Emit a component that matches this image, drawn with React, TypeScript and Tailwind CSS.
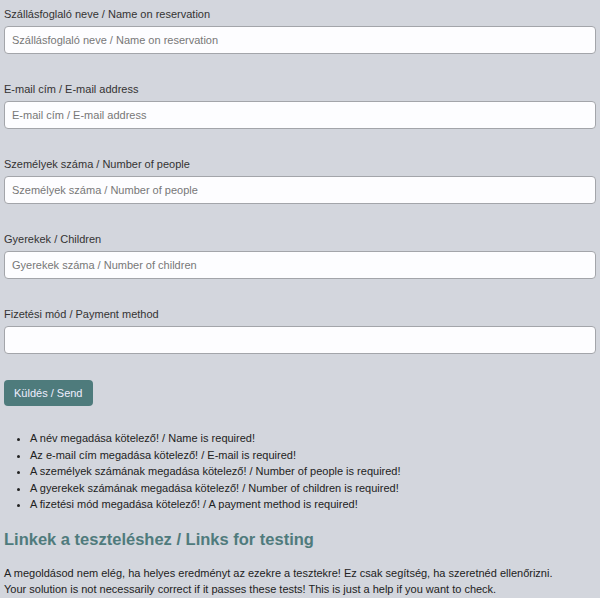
import React from "react";

const fields = [
  { label: "Szállásfoglaló neve / Name on reservation", ph: "Szállásfoglaló neve / Name on reservation" },
  { label: "E-mail cím / E-mail address", ph: "E-mail cím / E-mail address" },
  { label: "Személyek száma / Number of people", ph: "Személyek száma / Number of people" },
  { label: "Gyerekek / Children", ph: "Gyerekek száma / Number of children" },
  { label: "Fizetési mód / Payment method", ph: "" },
];

const errors = [
  "A név megadása kötelező! / Name is required!",
  "Az e-mail cím megadása kötelező! / E-mail is required!",
  "A személyek számának megadása kötelező! / Number of people is required!",
  "A gyerekek számának megadása kötelező! / Number of children is required!",
  "A fizetési mód megadása kötelező! / A payment method is required!",
];

export default function App() {
  return (
    <div
      className="min-h-[598px] w-full bg-[#d3d6dd] px-[4px] pt-[6px] text-[#333] text-[11px]"
      style={{ fontFamily: '"Liberation Sans", Arial, sans-serif' }}
    >
      {fields.map((f, i) => (
        <div key={i} className="mb-[27px]">
          <label className="block leading-[16px] mb-[4px]">{f.label}</label>
          <input
            className="block w-full h-[28px] rounded-[4px] border border-[#a3a5aa] bg-[#fdfdff] px-[7px] text-[11px] placeholder:text-[#777] outline-none"
            placeholder={f.ph}
          />
        </div>
      ))}
      <button className="block h-[26px] px-[10px] rounded-[4px] bg-[#4e7b7c] text-[#eef] text-[11px] leading-[16px] -mt-[1px]">
        Küldés / Send
      </button>
      <ul className="list-disc pl-[26px] mt-[24px] leading-[16.5px] text-[#222]">
        {errors.map((e, i) => (
          <li key={i}>{e}</li>
        ))}
      </ul>
      <h2 className="mt-[15px] text-[16.5px] font-bold leading-[22px] text-[#4f7b7c]">
        Linkek a teszteléshez / Links for testing
      </h2>
      <p className="mt-[15px] leading-[16px] text-[#222]">
        A megoldásod nem elég, ha helyes eredményt az ezekre a tesztekre! Ez csak segítség, ha szeretnéd ellenőrizni.
        <br />
        Your solution is not necessarily correct if it passes these tests! This is just a help if you want to check.
      </p>
    </div>
  );
}
